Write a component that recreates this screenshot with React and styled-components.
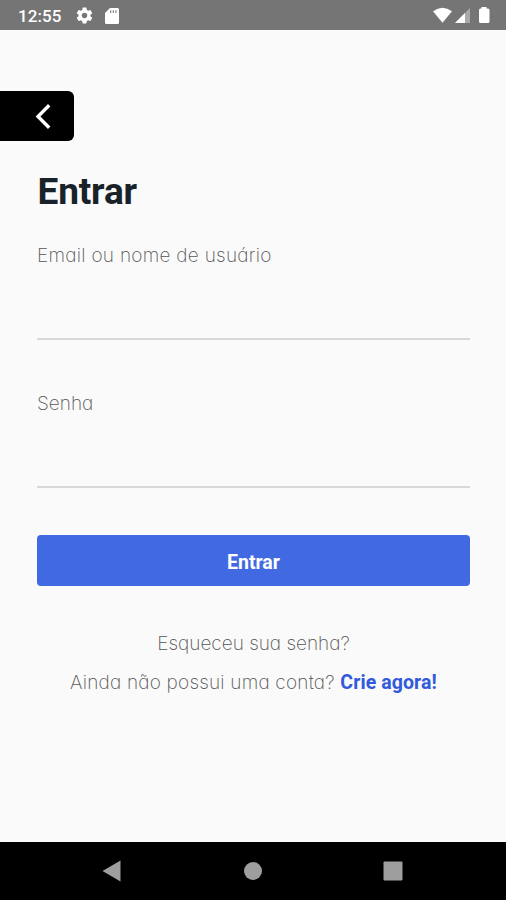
import React, { useState } from "react";
import styled, { createGlobalStyle } from "styled-components";

const App = () => {
  const [form, setForm] = useState({ user: "", password: "" });

  const handleSubmit = (event) => {
    event.preventDefault();
    setForm({ user: "", password: "" });
  };

  return (
    <Screen>
      <GlobalStyle />
      <StatusBar>
        <Clock>12:55</Clock>
        <SettingsIcon />
        <SdCardIcon />
        <SignalIcons />
      </StatusBar>
      <Content>
        <BackButton type="button" aria-label="Voltar">
          <svg width="16" height="26" viewBox="0 0 16 26" fill="none">
            <path d="M14.2 2.2L3 13.5L14.2 24.8" stroke="#fff" strokeWidth="3.4" />
          </svg>
        </BackButton>
        <Form onSubmit={handleSubmit}>
          <Title>Entrar</Title>
          <Label htmlFor="user" $spacing="0.27px">
            Email ou nome de usuário
          </Label>
          <Input
            id="user"
            type="text"
            value={form.user}
            onChange={(e) => setForm({ ...form, user: e.target.value })}
          />
          <Label htmlFor="password" $spacing="0px">
            Senha
          </Label>
          <Input
            id="password"
            type="password"
            value={form.password}
            onChange={(e) => setForm({ ...form, password: e.target.value })}
          />
          <SubmitButton type="submit">Entrar</SubmitButton>
          <FooterText $spacing="0px">Esqueceu sua senha?</FooterText>
          <FooterText $spacing="0.2px">
            Ainda não possui uma conta? <SignUp>Crie agora!</SignUp>
          </FooterText>
        </Form>
      </Content>
      <NavBar>
        <svg width="20" height="22" viewBox="0 0 20 22">
          <path d="M0.5 11L18.5 0.5V21.5Z" fill="#9e9e9e" />
        </svg>
        <svg width="20" height="20" viewBox="0 0 20 20">
          <circle cx="10" cy="10" r="9" fill="#9e9e9e" />
        </svg>
        <svg width="20" height="20" viewBox="0 0 20 20">
          <rect x="0.5" y="0.5" width="19" height="19" rx="1" fill="#9e9e9e" />
        </svg>
      </NavBar>
    </Screen>
  );
};

const SettingsIcon = () => (
  <svg width="19" height="19" viewBox="0 0 24 24" fill="#fff">
    <path d="M19.43 12.98c.04-.32.07-.64.07-.98s-.03-.66-.07-.98l2.11-1.65c.19-.15.24-.42.12-.64l-2-3.46c-.12-.22-.39-.3-.61-.22l-2.49 1c-.52-.4-1.08-.73-1.69-.98l-.38-2.65C14.46 2.18 14.25 2 14 2h-4c-.25 0-.46.18-.49.42l-.38 2.65c-.61.25-1.17.59-1.69.98l-2.49-1c-.23-.09-.49 0-.61.22l-2 3.46c-.13.22-.07.49.12.64l2.11 1.65c-.04.32-.07.65-.07.98s.03.66.07.98l-2.11 1.65c-.19.15-.24.42-.12.64l2 3.46c.12.22.39.3.61.22l2.49-1c.52.4 1.08.73 1.69.98l.38 2.65c.03.24.24.42.49.42h4c.25 0 .46-.18.49-.42l.38-2.65c.61-.25 1.17-.59 1.69-.98l2.49 1c.23.09.49 0 .61-.22l2-3.46c.12-.22.07-.49-.12-.64l-2.11-1.65zM12 15.5c-1.93 0-3.5-1.57-3.5-3.5s1.57-3.5 3.5-3.5 3.5 1.57 3.5 3.5-1.57 3.5-3.5 3.5z" />
  </svg>
);

const SdCardIcon = () => (
  <CardSvg width="14" height="16" viewBox="0 0 14 16">
    <path
      d="M5 0H12.5Q14 0 14 1.5V14.5Q14 16 12.5 16H1.5Q0 16 0 14.5V5Z"
      fill="#fff"
    />
    <path d="M5.7 2.2V5M8.3 2.2V5M10.9 2.2V5" stroke="#888" strokeWidth="1.2" />
  </CardSvg>
);

const SignalIcons = () => (
  <SignalSvg width="58" height="18" viewBox="0 0 58 18">
    <path d="M0 4.2Q9.5 -2.8 19 4.2L9.5 15.8Z" fill="#fff" />
    <path d="M22 16L37 1V16Z" fill="#a9a9a9" />
    <path d="M22 16L32 6V16Z" fill="#fff" />
    <path
      d="M48.5 0H53.5V1.5H55Q56.5 1.5 56.5 3V14.5Q56.5 16 55 16H47.5Q46 16 46 14.5V3Q46 1.5 47.5 1.5H48.5Z"
      fill="#fff"
    />
  </SignalSvg>
);

const GlobalStyle = createGlobalStyle`
  * {
    box-sizing: border-box;
  }
  body {
    margin: 0;
    font-family: Roboto, sans-serif;
  }
`;

const Screen = styled.div`
  display: flex;
  flex-direction: column;
  height: 900px;
  background: #fafafa;
  overflow: hidden;
`;

const StatusBar = styled.header`
  display: flex;
  align-items: center;
  height: 30px;
  padding: 1px 15px 0 18px;
  background: #757575;
`;

const Clock = styled.span`
  width: 57px;
  font-size: 17px;
  font-weight: 500;
  letter-spacing: 0.1px;
  color: #fff;
`;

const CardSvg = styled.svg`
  margin-left: 11px;
`;

const SignalSvg = styled.svg`
  margin-left: auto;
`;

const Content = styled.main`
  flex: 1;
  padding-top: 61px;
`;

const BackButton = styled.button`
  display: flex;
  align-items: center;
  width: 74px;
  height: 50px;
  padding: 0 0 0 35px;
  border: none;
  border-radius: 0 6px 6px 0;
  background: #000;
  cursor: pointer;
`;

const Form = styled.form`
  display: flex;
  flex-direction: column;
  padding: 30px 36px 0 37px;
`;

const Title = styled.h1`
  margin: 0 0 30px;
  padding-left: 0.5px;
  font-size: 37px;
  font-weight: 700;
  line-height: 42px;
  letter-spacing: -0.15px;
  color: #192228;
`;

const Label = styled.label`
  font-family: Inter, sans-serif;
  font-size: 19px;
  font-weight: 200;
  line-height: 26px;
  letter-spacing: ${(props) => props.$spacing};
  font-feature-settings: "cv11";
  color: #555;
`;

const Input = styled.input`
  width: 100%;
  height: 71px;
  margin-bottom: 51px;
  padding: 0;
  border: none;
  border-bottom: 2px solid #d9d9d9;
  outline: none;
  background: transparent;
  font-size: 19px;

  &#password {
    margin-bottom: 47px;
  }
`;

const SubmitButton = styled.button`
  height: 51px;
  margin-bottom: 45px;
  padding: 3px 0 0;
  border: none;
  border-radius: 4px;
  background: #4169e1;
  color: #fff;
  font-family: Roboto, sans-serif;
  font-size: 19.5px;
  font-weight: 700;
  cursor: pointer;
`;

const FooterText = styled.p`
  margin: 0 0 13px;
  font-family: Inter, sans-serif;
  font-size: 19px;
  font-weight: 200;
  line-height: 26px;
  letter-spacing: ${(props) => props.$spacing};
  font-feature-settings: "cv11";
  text-align: center;
  white-space: nowrap;
  color: #555;
`;

const SignUp = styled.a`
  font-family: Roboto, sans-serif;
  font-size: 19.5px;
  font-weight: 700;
  letter-spacing: 0.1px;
  color: #3159dc;
  cursor: pointer;
`;

const NavBar = styled.nav`
  display: flex;
  align-items: center;
  justify-content: space-between;
  height: 58px;
  padding: 0 103px 0 102px;
  background: #000;
`;

export default App;
